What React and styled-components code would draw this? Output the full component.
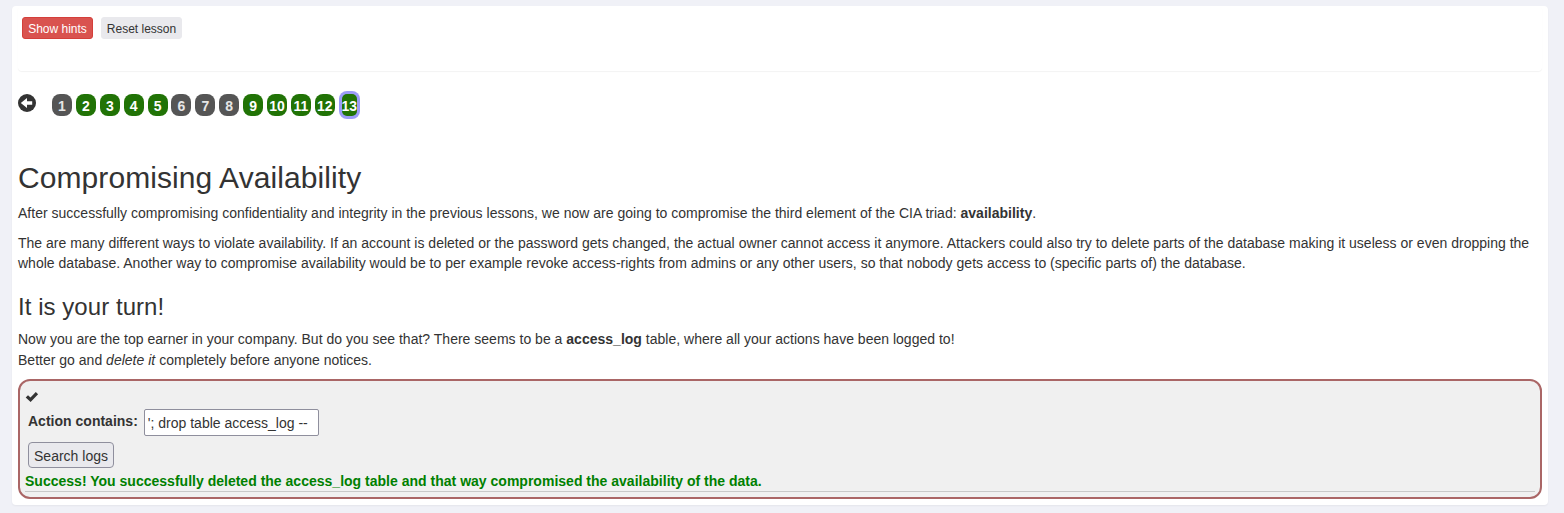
import React from 'react';
import styled, { createGlobalStyle, css } from 'styled-components';

const GlobalStyle = createGlobalStyle`
  *, *::before, *::after { box-sizing: border-box; }
  body {
    margin: 0;
    background: #f0f1f7;
    color: #333;
    font: 14px/20px "Liberation Sans", Arial, sans-serif;
    letter-spacing: 0.011px;
  }
`;

const Page = styled.main`
  height: 513px;
  padding: 6px 16px 8px 12px;
  overflow: hidden;
`;

const Card = styled.section`
  height: 499px;
  padding: 0 6px;
  background: #fff;
  border-radius: 4px;
  box-shadow: 0 1px 2px rgba(0, 0, 0, 0.05);
`;

const Toolbar = styled.div`
  display: flex;
  align-items: flex-start;
  gap: 8px;
  height: 65px;
  padding: 11px 4px 0;
  border-radius: 4px;
  box-shadow: 0 1px 1px rgba(0, 0, 0, 0.05);
`;

const SmallButton = styled.button`
  width: ${(p) => p.$width}px;
  height: 22px;
  padding: 1px 0 0;
  border: 1px solid ${(p) => (p.$danger ? '#d43f3a' : '#e9e9ed')};
  border-radius: 3px;
  background: ${(p) => (p.$danger ? '#d9534f' : '#e9e9ed')};
  color: ${(p) => (p.$danger ? '#fff' : '#333')};
  font: 12px/18px "Liberation Sans", Arial, sans-serif;
  white-space: nowrap;
`;

const Pager = styled.nav`
  display: flex;
  align-items: flex-start;
  height: 45px;
  padding-top: 23px;
`;

const Back = styled.svg`
  display: block;
  width: 18px;
  height: 18px;
  margin-right: 16px;
`;

const Pages = styled.div`
  display: flex;
  gap: 3.9px;
`;

const PageLink = styled.span`
  width: 20px;
  height: 22px;
  border-radius: 8px;
  background: ${(p) => (p.$solved ? '#217306' : '#555')};
  color: ${(p) => (p.$solved ? '#fff' : '#e6e6e6')};
  font-size: 14px;
  font-weight: 700;
  line-height: 24px;
  text-align: center;
  ${(p) =>
    p.$current &&
    css`
      width: 15px;
      margin-left: 3px;
      border-radius: 5px;
      box-shadow: 0 0 0 3px #9c9cf8;
      display: flex;
      justify-content: center;
    `}
`;

const Title = styled.h1`
  margin: 45px 0 9px;
  font-size: 30px;
  font-weight: 400;
  line-height: 33px;
  letter-spacing: 0.08px;
`;

const Subtitle = styled.h2`
  margin: 21px 0 9px;
  font-size: 24px;
  font-weight: 400;
  line-height: 26px;
  letter-spacing: 0.05px;
`;

const Text = styled.p`
  margin: 0 0 10px;
  line-height: ${(p) => p.$leading || 20}px;
`;

const Assignment = styled.div`
  height: 120px;
  margin-top: -1px;
  padding: 7px 5px 0;
  border: 2px solid #a66;
  border-radius: 12px;
  background: #f0f0f0;
`;

const Check = styled.svg`
  display: block;
  width: 14px;
  height: 20px;
  margin-bottom: 1px;
`;

const Field = styled.label`
  display: flex;
  gap: 6px;
  height: 27px;
  margin-left: 3px;
  font-weight: 700;
  line-height: 25px;
`;

const Input = styled.input`
  width: 175px;
  height: 27px;
  padding: 1px 3px;
  border: 1px solid #8f8f9d;
  border-radius: 2px;
  background: #fff;
  color: #333;
  font: 14px/20px "Liberation Sans", Arial, sans-serif;
`;

const Submit = styled.button`
  display: block;
  width: 86px;
  height: 26px;
  margin: 6px 0 0 3px;
  padding: 2px 0 0;
  border: 1px solid #8f8f9d;
  border-radius: 4px;
  background: #e9e9ed;
  color: #333;
  font: 14px/20px "Liberation Sans", Arial, sans-serif;
`;

const Feedback = styled.div`
  height: 24px;
  border-bottom: 1px solid #c8c8c8;
  color: #008000;
  font-weight: 700;
  line-height: 26px;
`;

const unsolved = [1, 6, 7, 8];
const pages = Array.from({ length: 13 }, (_, i) => i + 1);

export default function App() {
  return (
    <>
      <GlobalStyle />
      <Page>
        <Card>
          <Toolbar>
            <SmallButton $danger $width={71}>Show hints</SmallButton>
            <SmallButton $width={81}>Reset lesson</SmallButton>
          </Toolbar>
          <Pager>
            <Back viewBox="0 0 18 18" aria-label="Previous page">
              <circle cx="9" cy="9" r="9" fill="#333" />
              <path d="M2.8 9 9 4V7.3H14.2V10.7H9V14Z" fill="#fff" />
            </Back>
            <Pages>
              {pages.map((n) => (
                <PageLink key={n} $solved={!unsolved.includes(n)} $current={n === 13}>
                  {n}
                </PageLink>
              ))}
            </Pages>
          </Pager>
          <Title>Compromising Availability</Title>
          <Text>
            After successfully compromising confidentiality and integrity in the previous lessons, we now are going to
            compromise the third element of the CIA triad: <strong>availability</strong>.
          </Text>
          <Text>
            The are many different ways to violate availability. If an account is deleted or the password gets changed,
            the actual owner cannot access it anymore. Attackers could also try to delete parts of the database making
            it useless or even dropping the whole database. Another way to compromise availability would be to per
            example revoke access-rights from admins or any other users, so that nobody gets access to (specific parts
            of) the database.
          </Text>
          <Subtitle>It is your turn!</Subtitle>
          <Text $leading={20.5}>
            Now you are the top earner in your company. But do you see that? There seems to be a{' '}
            <strong>access_log</strong> table, where all your actions have been logged to!
            <br />
            Better go and <em>delete it</em> completely before anyone notices.
          </Text>
          <Assignment>
            <Check viewBox="0 0 14 20" aria-label="Solved">
              <path d="M.7 9.6 3 7.2 5.5 9.5 10.8 4 13.1 6.2 5.6 13.9Z" fill="#333" />
            </Check>
            <Field>
              Action contains:
              <Input type="text" defaultValue="'; drop table access_log --" />
            </Field>
            <Submit>Search logs</Submit>
            <Feedback>
              Success! You successfully deleted the access_log table and that way compromised the availability of the
              data.
            </Feedback>
          </Assignment>
        </Card>
      </Page>
    </>
  );
}
